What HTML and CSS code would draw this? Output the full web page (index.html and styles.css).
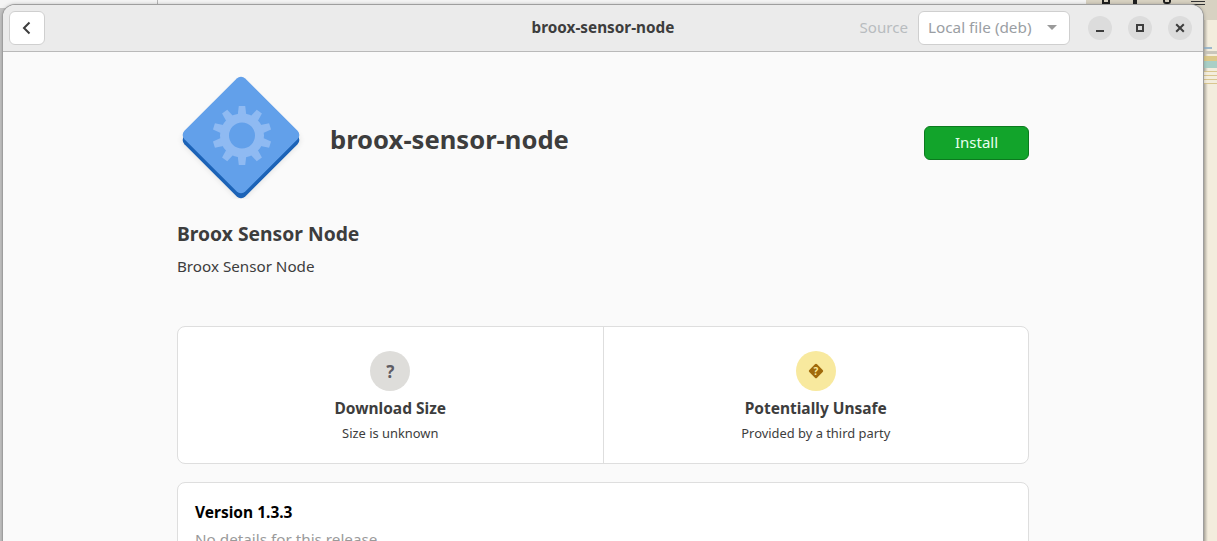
FILE: index.html
```html
<!DOCTYPE html>
<html lang="en">
<head>
<meta charset="utf-8">
<title>broox-sensor-node</title>
<link rel="stylesheet" href="styles.css">
</head>
<body>
<div class="desktop">
  <div class="bg-line"></div>
  <div class="bg-toolbar"><i class="tb-mark m1"></i><i class="tb-mark m2"></i><i class="tb-mark m3"></i><i class="tb-list"></i></div>
  <div class="bg-doc"><div class="doc-a"></div><div class="doc-d"></div><div class="doc-b"></div><div class="doc-c"></div><div class="doc-e"></div></div>
  <div class="window">
    <header class="headerbar">
      <button class="btn back" aria-label="Back">
        <svg width="16" height="16" viewBox="0 0 16 16"><path d="M10.500 2.500 5 8l5.500 5.500" fill="none" stroke="#3d3d3d" stroke-width="2"/></svg>
      </button>
      <div class="hb-title">broox-sensor-node</div>
      <div class="hb-right">
        <span class="source">Source</span>
        <div class="combo"><span>Local file (deb)</span><i class="arrow"></i></div>
        <div class="wm">
          <button class="wbtn" aria-label="Minimize"><svg width="12" height="12" viewBox="0 0 12 12"><rect x="2" y="8" width="8" height="2" fill="#3d3d3d"/></svg></button>
          <button class="wbtn" aria-label="Maximize"><svg width="12" height="12" viewBox="0 0 12 12"><rect x="3" y="3" width="6" height="6" fill="none" stroke="#3d3d3d" stroke-width="2"/></svg></button>
          <button class="wbtn" aria-label="Close"><svg width="12" height="12" viewBox="0 0 12 12"><path d="M2.200 2.200l7.600 7.600M9.800 2.200l-7.600 7.600" stroke="#3d3d3d" stroke-width="2"/></svg></button>
        </div>
      </div>
    </header>
    <main class="content">
      <div class="column">
        <section class="app-head">
          <svg class="app-icon" width="128" height="128" viewBox="0 0 128 128">
            <defs>
              <filter id="soft" x="-20%" y="-20%" width="140%" height="140%"><feGaussianBlur stdDeviation="3"/></filter>
              <g id="tooth"><path d="M-4.200 -21H4.200L3.200 -29.500H-3.200Z"/></g>
            </defs>
            <rect x="21" y="26" width="86" height="86" rx="6" transform="rotate(45 64 69)" fill="#000" opacity=".12" filter="url(#soft)"/>
            <rect x="21" y="21" width="86" height="86" rx="6" transform="translate(0 5) rotate(45 64 64)" fill="#1c63b7"/>
            <rect x="21" y="21" width="86" height="86" rx="6" transform="rotate(45 64 64)" fill="#62a0ea"/>
            <g transform="translate(65 64.500)" fill="#8fbaf2">
              <use href="#tooth"/>
              <use href="#tooth" transform="rotate(36)"/>
              <use href="#tooth" transform="rotate(72)"/>
              <use href="#tooth" transform="rotate(108)"/>
              <use href="#tooth" transform="rotate(144)"/>
              <use href="#tooth" transform="rotate(180)"/>
              <use href="#tooth" transform="rotate(216)"/>
              <use href="#tooth" transform="rotate(252)"/>
              <use href="#tooth" transform="rotate(288)"/>
              <use href="#tooth" transform="rotate(324)"/>
              <circle r="17.500" fill="none" stroke="#8fbaf2" stroke-width="9"/>
            </g>
          </svg>
          <h1 class="app-name">broox-sensor-node</h1>
          <button class="install">Install</button>
        </section>
        <h2 class="summary">Broox Sensor Node</h2>
        <p class="desc">Broox Sensor Node</p>
        <section class="tiles">
          <div class="tile">
            <div class="tile-icon grey"><span>?</span></div>
            <div class="tile-title">Download Size</div>
            <div class="tile-sub">Size is unknown</div>
          </div>
          <div class="tile">
            <div class="tile-icon yellow">
              <svg width="16" height="16" viewBox="0 0 16 16"><rect x="2.500" y="2.500" width="11" height="11" rx="1.500" transform="rotate(45 8 8)" fill="#a0690a"/><text x="8" y="11.500" class="warn-q">?</text></svg>
            </div>
            <div class="tile-title">Potentially Unsafe</div>
            <div class="tile-sub">Provided by a third party</div>
          </div>
        </section>
        <section class="version">
          <h3 class="v-title">Version 1.3.3</h3>
          <p class="v-note">No details for this release</p>
        </section>
      </div>
    </main>
  </div>
</div>
</body>
</html>
```

FILE: styles.css
```css
* { box-sizing: border-box; }
html, body { margin: 0; height: 100%; overflow: hidden; }
body { font-family: "Noto Sans", "Open Sans", sans-serif; color: #3d3d3d; }
button { font: inherit; padding: 0; }

.desktop { position: relative; width: 1217px; height: 541px; background: #c4c4c4; overflow: hidden; }
.desktop::before { content: ""; position: absolute; left: 0; right: 0; top: 0; height: 8px; background: #f4f4f4; }
.bg-line { position: absolute; left: 157px; top: 0; width: 1px; height: 5px; background: #b5b5b5; }
.bg-toolbar { position: absolute; left: 1086px; top: 0; width: 131px; height: 20px; background: #d8d2c2; }
.tb-mark { position: absolute; top: 0; height: 4px; border: 2px solid #1f1f1f; border-top: 0; }
.m1 { left: 16px; width: 8px; }
.m2 { left: 47px; width: 4px; border-width: 0 1px 2px; border-color: #1f1f1f; background: #1f1f1f; }
.m3 { left: 77px; width: 8px; border-radius: 0 0 3px 3px; }
.tb-list { position: absolute; left: 105px; top: 1px; width: 14px; height: 4px; border-top: 1px solid #333; border-bottom: 1px solid #333; }
.bg-doc { position: absolute; left: 1203px; top: 20px; width: 14px; height: 521px; background: #f3eddd; }
.bg-doc::before { content: ""; position: absolute; left: 0; top: 0; width: 5px; height: 521px; background: linear-gradient(90deg, rgba(0,0,0,.28), rgba(0,0,0,0)); }
.doc-a { position: absolute; left: 0; top: 27px; width: 9px; height: 2px; background: #9db8cc; }
.doc-d { position: absolute; left: 2px; top: 31px; width: 12px; height: 3px; background: #c9c6bb; }
.doc-b { position: absolute; left: 0; top: 41px; width: 14px; height: 7px; background: #a9cfc6; }
.doc-c { position: absolute; left: 0; top: 36px; width: 14px; height: 5px; background: #dcc98a; }
.doc-e { position: absolute; left: 0; top: 51px; width: 14px; height: 13px; background: repeating-linear-gradient(180deg, #d9c68f 0 1px, #f3eddd 1px 4px); }

.window { position: absolute; left: 3px; top: 5px; width: 1200px; height: 560px; background: #fafafa; border-radius: 12px 12px 0 0; overflow: hidden; box-shadow: 0 0 0 1px #9e9e9e, 0 0 4px rgba(0,0,0,.35); }

.headerbar { position: relative; height: 47px; background: #ebebeb; border-bottom: 1px solid #b9b9b9; display: flex; align-items: center; justify-content: space-between; padding: 0 11px 1px 6px; }
.btn.back { width: 36px; height: 34px; background: #fff; border: 1px solid #cfcfcf; border-radius: 6px; display: flex; align-items: center; justify-content: center; }
.hb-title { position: absolute; left: 0; right: 0; top: 12px; text-align: center; font-size: 15.300px; font-weight: 700; line-height: 20px; color: #3d3d3d; }
.hb-right { display: flex; align-items: center; }
.source { font-size: 15.100px; line-height: 20px; color: #b8bcbf; margin: -2px 10px 0 0; }
.combo { width: 152px; height: 34px; background: #fff; border: 1px solid #cfcfcf; border-radius: 6px; display: flex; align-items: center; justify-content: space-between; padding: 0 12px 2px 9px; font-size: 15.300px; color: #9a9ea3; }
.arrow { width: 0; height: 0; margin-top: 2px; border-left: 5px solid transparent; border-right: 5px solid transparent; border-top: 5px solid #9a9a9a; }
.wm { display: flex; gap: 16px; margin-left: 18px; }
.wbtn { width: 24px; height: 24px; border: 0; border-radius: 50%; background: #dcdcdc; display: flex; align-items: center; justify-content: center; }

.content { display: flex; justify-content: center; }
.column { width: 852px; }
.app-head { display: flex; align-items: flex-start; height: 147px; padding-top: 19px; }
.app-icon { flex: none; }
.app-name { margin: 52px 0 0 25px; font-size: 25.600px; font-weight: 700; line-height: 34px; color: #3d3d3d; flex: 1; }
.install { flex: none; width: 105px; height: 34px; margin-top: 55px; padding-bottom: 3px; background: #12a42b; border: 1px solid #0c7a1f; border-radius: 6px; color: #e8fff0; font-size: 15px; }

.summary { margin: 22px 0 0; font-size: 19.300px; font-weight: 700; line-height: 26px; color: #3d3d3d; }
.desc { margin: 9px 0 0; font-size: 15.200px; line-height: 20px; color: #3d3d3d; }

.tiles { display: flex; height: 138px; margin-top: 50px; background: #fff; border: 1px solid #dedede; border-radius: 8px; }
.tile { flex: 1; display: flex; flex-direction: column; align-items: center; padding-top: 24px; }
.tile + .tile { border-left: 1px solid #dedede; }
.tile-icon { width: 40px; height: 40px; border-radius: 50%; display: flex; align-items: center; justify-content: center; }
.tile-icon.grey { background: #deddda; font-size: 17px; font-weight: 700; color: #5e5c64; }
.tile-icon.yellow { background: #f8e99e; }
.warn-q { font-family: "Noto Sans", sans-serif; font-size: 10px; font-weight: 700; text-anchor: middle; fill: #f8e99e; }
.tile-title { margin-top: 7px; font-size: 15.500px; font-weight: 700; line-height: 20px; color: #3d3d3d; }
.tile-sub { margin-top: 5px; font-size: 12.900px; line-height: 20px; color: #3d3d3d; }

.version { margin-top: 18px; height: 120px; background: #fff; border: 1px solid #dedede; border-radius: 8px; padding: 19px 17px; }
.v-title { margin: 0; font-size: 15.500px; font-weight: 700; line-height: 20px; color: #000; }
.v-note { margin: 7px 0 0; font-size: 15.250px; line-height: 20px; color: #9a9a9a; }
```
